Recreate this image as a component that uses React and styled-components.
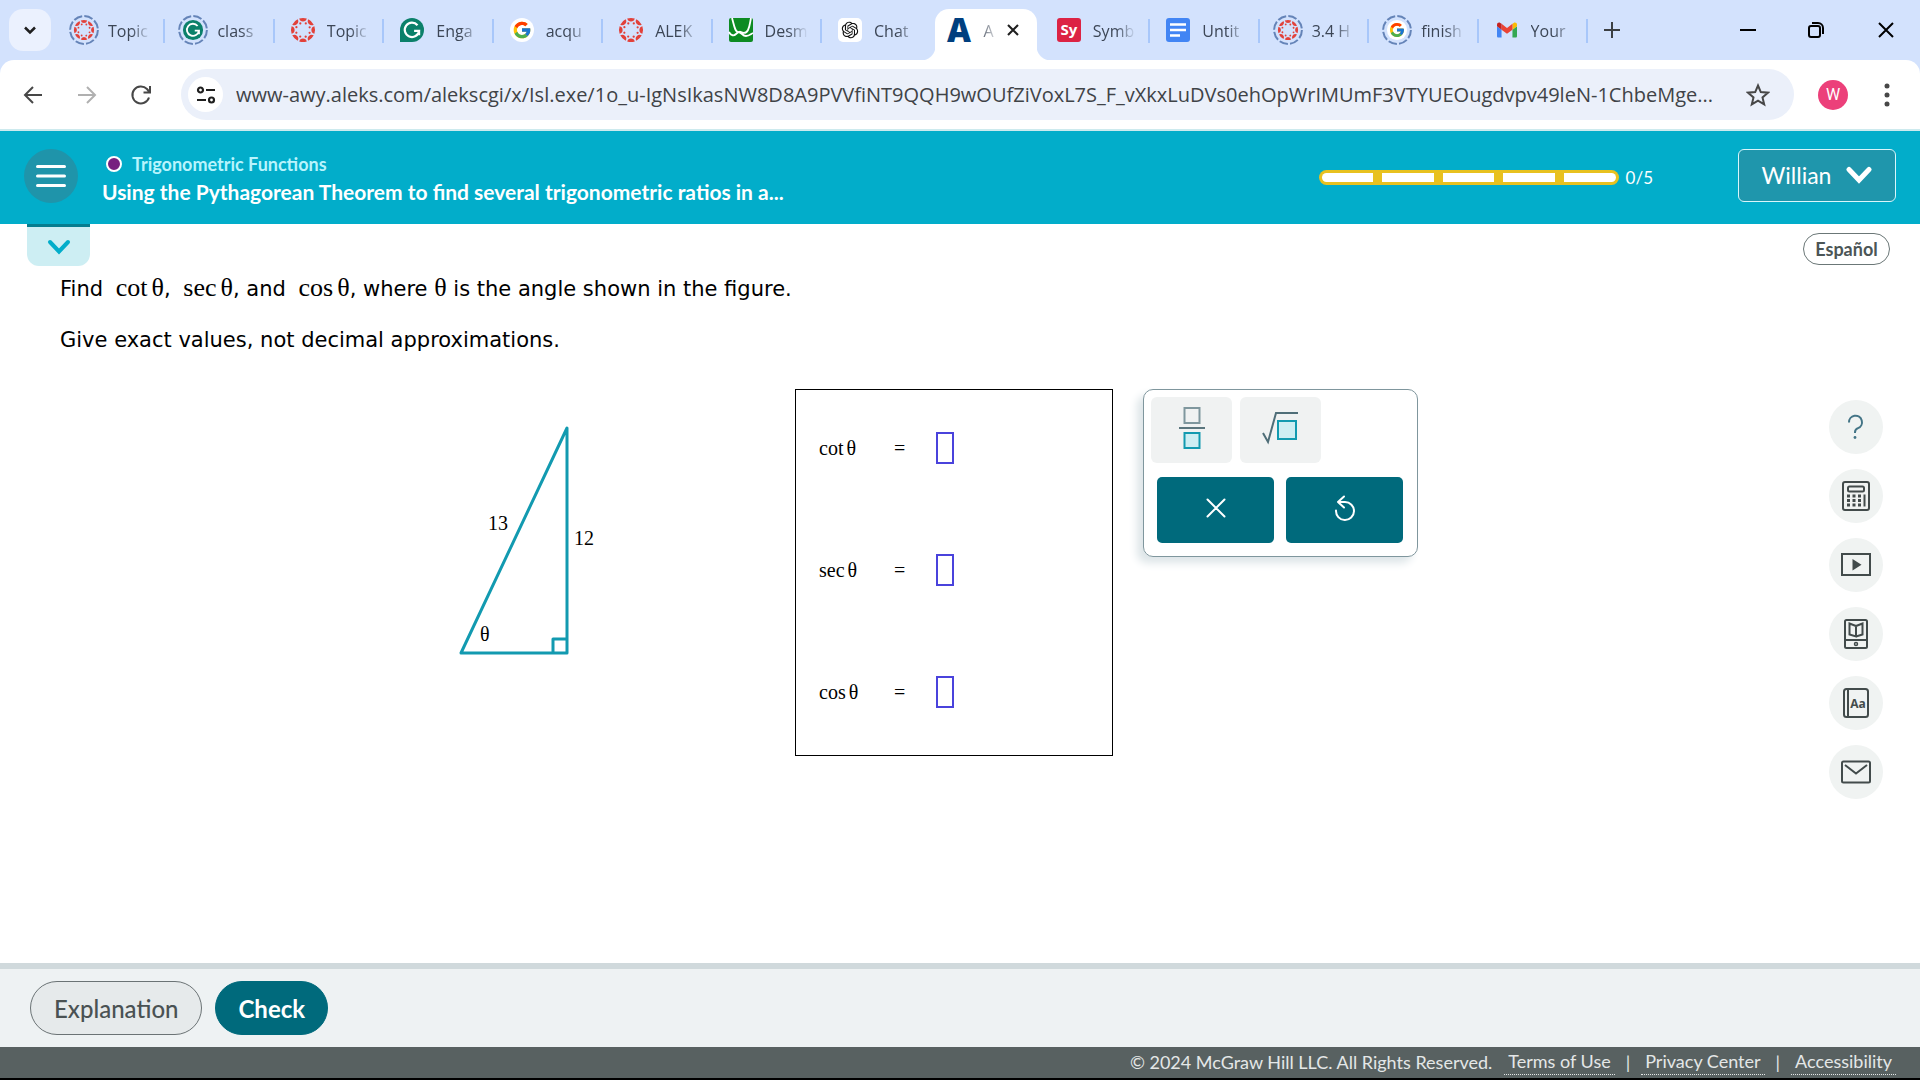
import styled, { createGlobalStyle, css } from 'styled-components';
import { FcGoogle } from 'react-icons/fc';
import { RiOpenaiFill } from 'react-icons/ri';

const GlobalStyle = createGlobalStyle`
  * {
    box-sizing: border-box;
  }
  body {
    margin: 0;
    background: white;
    font-family: Lato, sans-serif;
  }
  button {
    padding: 0;
    border: 0;
    background: none;
    color: inherit;
    font: inherit;
    cursor: pointer;
  }
  svg {
    display: block;
    flex: none;
  }
`;

const Page = styled.div`
  display: flex;
  flex-direction: column;
  min-height: 100vh;
  border-bottom: 2px solid black;
`;

/* Browser window */

const TabStrip = styled.div`
  display: flex;
  align-items: center;
  height: 60px;
  padding-left: 9px;
  background: #d3e2fd;
`;

const TabSearch = styled.button`
  display: grid;
  place-items: center;
  flex: none;
  width: 42px;
  height: 42px;
  margin-right: 5px;
  border-radius: 14px;
  background: #ebf1fe;
`;

const Tabs = styled.div`
  display: grid;
  grid-auto-flow: column;
  grid-auto-columns: minmax(0, 1fr);
  align-self: flex-end;
  flex: 1;
  max-width: 1532px;
  min-width: 0;
`;

const Tab = styled.div`
  position: relative;
  display: flex;
  align-items: center;
  min-width: 0;
  height: 51px;
  padding: 0 12px 9px 13px;

  ${props => props.$divider && css`
    &::after {
      content: '';
      position: absolute;
      right: 0;
      top: 10px;
      width: 2px;
      height: 24px;
      background: #a8c7fa;
    }
  `}

  ${props => props.$active && css`
    margin: 0 4px;
    padding: 0 12px 9px 9px;
    border-radius: 14px 14px 0 0;
    background: white;

    &::before,
    &::after {
      content: '';
      position: absolute;
      bottom: 0;
      width: 14px;
      height: 14px;
    }
    &::before {
      right: 100%;
      background: radial-gradient(circle at 0 0, transparent 14px, white 15px);
    }
    &::after {
      left: 100%;
      background: radial-gradient(circle at 100% 0, transparent 14px, white 15px);
    }
  `}
`;

const TabButton = styled.button`
  display: flex;
  align-items: center;
  flex: 1;
  gap: 9px;
  min-width: 0;
`;

const TabLabel = styled.span`
  flex: 1;
  min-width: 0;
  padding-top: 2px;
  color: #3c4656;
  font-family: "Open Sans", sans-serif;
  font-size: 16px;
  line-height: 24px;
  text-align: left;
  white-space: nowrap;
  mask-image: linear-gradient(to left, transparent 2px, black 22px);
`;

const IconButton = styled.button`
  display: grid;
  place-items: center;
  flex: none;
  width: ${props => props.$size}px;
  height: ${props => props.$size}px;
`;

const WindowControls = styled.div`
  display: flex;
  gap: 35px;
  margin-left: auto;
  padding-right: 17px;
`;

const ToolbarBack = styled.div`
  background: #d3e2fd;
`;

const Toolbar = styled.div`
  display: flex;
  align-items: center;
  height: 71px;
  padding: 0 15px;
  border-bottom: 2px solid #cdeaee;
  border-radius: 14px 14px 0 0;
  background: white;
`;

const NavButtons = styled.div`
  display: flex;
  gap: 18px;
  margin-right: 22px;
`;

const AddressBar = styled.div`
  display: flex;
  align-items: center;
  flex: 1;
  gap: 13px;
  min-width: 0;
  height: 51px;
  margin-right: 24px;
  padding: 0 18px 0 7px;
  border-radius: 26px;
  background: #ebf0fa;
`;

const SiteInfo = styled.button`
  display: grid;
  place-items: center;
  flex: none;
  width: 35px;
  height: 35px;
  border-radius: 50%;
  background: white;
`;

const Address = styled.input`
  flex: 1;
  min-width: 0;
  padding: 0;
  border: 0;
  outline: 0;
  background: none;
  color: #3f4347;
  font-family: "Open Sans", sans-serif;
  font-size: 20px;
  line-height: 28px;
`;

const Avatar = styled.button`
  flex: none;
  width: 30px;
  height: 30px;
  margin-right: 21px;
  border-radius: 50%;
  background: #ec407a;
  color: white;
  font-family: Roboto, sans-serif;
  font-size: 16px;
`;

/* Page header */

const Header = styled.header`
  display: flex;
  align-items: center;
  height: 93px;
  padding: 0 24px 4px;
  background: #02adca;
  color: white;
`;

const MenuButton = styled.button`
  display: grid;
  place-items: center;
  flex: none;
  width: 54px;
  height: 54px;
  margin-right: 24px;
  border-radius: 50%;
  background: #1f94aa;
`;

const Headings = styled.div`
  padding-top: 7px;
`;

const Topic = styled.div`
  display: flex;
  align-items: center;
  gap: 10px;
  padding-left: 4px;
  color: #b8f4fd;
  font-size: 18px;
  font-weight: 700;
  line-height: 24px;
`;

const TopicDot = styled.span`
  width: 16px;
  height: 16px;
  border: 2px solid white;
  border-radius: 50%;
  background: #77207f;
`;

const Title = styled.h1`
  margin: 2px 0 0;
  font-size: 21px;
  font-weight: 700;
  line-height: 28px;
  white-space: nowrap;
`;

const Progress = styled.div`
  display: flex;
  align-items: center;
  gap: 7px;
  margin-left: auto;
  margin-right: 85px;
  padding-top: 4px;
  font-size: 17px;
`;

const Segments = styled.div`
  display: flex;
  gap: 9px;
  width: 300px;
  height: 15px;
  padding: 3px;
  border-radius: 8px;
  background: #e8c11f;
`;

const Segment = styled.span`
  flex: 1;
  background: white;

  &:first-child {
    border-radius: 5px 0 0 5px;
  }
  &:last-child {
    border-radius: 0 5px 5px 0;
  }
`;

const UserButton = styled.button`
  display: flex;
  align-items: center;
  justify-content: center;
  gap: 15px;
  width: 158px;
  height: 53px;
  padding-bottom: 2px;
  border: 1px solid #d9f6fb;
  border-radius: 6px;
  background: #1f96ac;
  font-size: 23px;
`;

/* Exercise */

const Main = styled.main`
  display: flex;
  justify-content: space-between;
  flex: 1;
`;

const Exercise = styled.div`
  flex: 1;
`;

const Collapse = styled.button`
  display: grid;
  place-items: center;
  width: 63px;
  height: 42px;
  margin-left: 27px;
  border-top: 3px solid #057d8f;
  border-radius: 0 0 12px 12px;
  background: #cdeef3;
`;

const Question = styled.div`
  padding: 5px 60px 0;
  color: black;
  font-family: Verdana, "DejaVu Sans", sans-serif;
  font-size: 21px;
`;

const Line = styled.p`
  margin: 0;
  line-height: 36px;

  & + & {
    margin-top: 15px;
  }
`;

const Math = styled.span`
  font-family: "Liberation Serif", serif;
  font-size: ${props => (props.$large ? 26 : 20)}px;
  line-height: 24px;
`;

const MathTerm = styled(Math)`
  margin-left: ${props => (props.$large ? 6 : 0)}px;
`;

const Theta = styled.i`
  margin-left: ${props => (props.$large ? 4 : 3)}px;
  font-style: normal;
`;

const Workspace = styled.div`
  display: flex;
  align-items: flex-start;
  gap: 30px;
  margin-top: 31px;
  padding-left: 440px;
`;

const Figure = styled.svg`
  width: 200px;
  height: 300px;
  margin-right: 125px;
`;

const FigureText = styled.text`
  font-family: "Liberation Serif", serif;
  font-size: 20px;
  fill: black;
`;

const AnswerBox = styled.form`
  display: flex;
  flex-direction: column;
  gap: 90px;
  width: 318px;
  padding: 42px 23px 47px;
  border: 1px solid black;
`;

const AnswerRow = styled.label`
  display: grid;
  grid-template-columns: 75px 42px auto;
  align-items: center;
  justify-content: start;
  height: 32px;
`;

const AnswerInput = styled.input`
  width: 18px;
  height: 32px;
  padding: 0;
  border: 2px solid #4a43dc;
  outline: 0;
  background: white;
  text-align: center;
`;

const Palette = styled.div`
  width: 275px;
  padding: 7px 7px 13px;
  border: 1px solid #7f969d;
  border-radius: 10px;
  box-shadow: -6px 6px 8px #dde5e8;
`;

const Templates = styled.div`
  display: flex;
  gap: 8px;
`;

const TemplateButton = styled.button`
  display: grid;
  place-items: center;
  width: 81px;
  height: 66px;
  padding-bottom: 5px;
  border-radius: 6px;
  background: #f0f2f2;
`;

const Actions = styled.div`
  display: flex;
  gap: 12px;
  margin-top: 14px;
  padding: 0 7px 0 6px;
`;

const ActionButton = styled.button`
  display: grid;
  place-items: center;
  flex: 1;
  height: 66px;
  padding-bottom: 5px;
  border-radius: 5px;
  background: #006a7c;
`;

/* Right rail */

const Rail = styled.aside`
  display: flex;
  flex-direction: column;
  align-items: flex-end;
  padding: 9px 30px 0 0;
`;

const Language = styled.button`
  width: 87px;
  height: 32px;
  border: 1px solid #6b7777;
  border-radius: 16px;
  color: #4b5556;
  font-size: 18px;
  font-weight: 700;
`;

const Tools = styled.div`
  display: flex;
  flex-direction: column;
  gap: 15px;
  margin-top: 135px;
  padding-right: 7px;
`;

const ToolButton = styled.button`
  display: grid;
  place-items: center;
  width: 54px;
  height: 54px;
  border-radius: 50%;
  background: #f0f3f2;
`;

/* Bottom */

const ActionBar = styled.div`
  display: flex;
  align-items: center;
  gap: 13px;
  height: 84px;
  padding: 0 30px;
  border-top: 6px solid #d0d9dc;
  background: #eef2f3;
`;

const PillButton = styled.button`
  height: 54px;
  padding: 0 ${props => (props.$primary ? 22 : 23)}px;
  border: 1px solid ${props => (props.$primary ? '#006a7c' : '#6b7375')};
  border-radius: 27px;
  background: ${props => (props.$primary ? '#006a7c' : '#e6eaeb')};
  color: ${props => (props.$primary ? 'white' : '#4a5253')};
  font-size: 24px;
  font-weight: ${props => (props.$primary ? 700 : 500)};
`;

const Footer = styled.footer`
  display: flex;
  align-items: center;
  justify-content: flex-end;
  height: 31px;
  padding: 0 24px 2px;
  background: #586161;
  color: #e4e7e7;
  font-size: 18px;
`;

const FooterLink = styled.a`
  padding: 0 4px 1px;
  border-bottom: 1px dotted #e4e7e7;
  color: inherit;
  line-height: 24px;
  text-decoration: none;
`;

const Copyright = styled.span`
  margin-right: 12px;
`;

const Bar = styled.span`
  margin: 0 11px;
`;

/* Drawings */

const spokes = [0, 45, 90, 135, 180, 225, 270, 315];

function CanvasMark() {
  return (
    <g fill="#e2413a">
      {spokes.map(angle => (
        <g key={angle} transform={`rotate(${angle} 15 15)`}>
          <path d="M11.2 3.6a12 12 0 0 1 7.6 0a3.9 3.9 0 0 1-7.6 0z" />
          <circle cx="17.8" cy="8.4" r="1.1" />
        </g>
      ))}
    </g>
  );
}

function GrammarlyMark({ square }) {
  return (
    <g>
      <circle cx="15" cy="15" r="12" fill="#0b806a" />
      {square && <path d="M3 15h12v12H3z" fill="#0b806a" />}
      <path
        d="M20.5 10.2a7.2 7.2 0 1 0 1.6 5.6h-5M22.1 15.8v4.4"
        fill="none"
        stroke="white"
        strokeWidth="2.2"
      />
    </g>
  );
}

function GoogleMark() {
  return (
    <g>
      <circle cx="15" cy="15" r="12" fill="white" />
      <FcGoogle x="5" y="5" size="20" />
    </g>
  );
}

function GmailMark() {
  return (
    <svg x="5" y="7" width="20" height="16" viewBox="52 42 88 66">
      <path fill="#4285f4" d="M58 108h14V74L52 59v43c0 3.32 2.69 6 6 6" />
      <path fill="#34a853" d="M120 108h14c3.32 0 6-2.69 6-6V59l-20 15" />
      <path fill="#fbbc04" d="M120 48v26l20-15v-8c0-7.42-8.47-11.65-14.4-7.2" />
      <path fill="#ea4335" d="M72 74V48l24 18 24-18v26L96 92" />
      <path fill="#c5221f" d="M52 51v8l20 15V48l-5.6-4.2c-5.94-4.45-14.4-.22-14.4 7.2" />
    </svg>
  );
}

const marks = {
  canvas: <CanvasMark />,
  grammarly: <GrammarlyMark />,
  grammarlySquare: <GrammarlyMark square />,
  google: <GoogleMark />,
  gmail: <GmailMark />,
  desmos: (
    <g>
      <rect x="3" y="3" width="24" height="24" rx="2" fill="#0d8b22" />
      <path
        d="M6 3c2 7 3 14 6 14 4 0 4 4 8 4 3 0 5-2 7-3M3 17c2 4 5 4 7 2s3-3 5-2 5 2 7-2 2-8 3-12"
        fill="none"
        stroke="white"
        strokeWidth="1.8"
      />
    </g>
  ),
  openai: (
    <g>
      <rect x="3" y="3" width="24" height="24" rx="5" fill="white" />
      <RiOpenaiFill x="5" y="5" size="20" color="#111" />
    </g>
  ),
  aleks: (
    <text x="15" y="27" textAnchor="middle" fontFamily="Open Sans" fontWeight="800" fontSize="33" fill="#003f7f">A</text>
  ),
  symbolab: (
    <g>
      <rect x="3" y="3" width="24" height="24" rx="3" fill="#dc2344" />
      <text x="15" y="20" textAnchor="middle" fontFamily="Open Sans" fontWeight="700" fontSize="15" fill="white">Sy</text>
    </g>
  ),
  docs: (
    <g>
      <rect x="3" y="3" width="24" height="24" rx="3" fill="#4285f4" />
      <path d="M7 9.5h16M7 15h16M7 20.5h10" stroke="white" strokeWidth="2.6" />
    </g>
  ),
};

function Favicon({ mark, ring }) {
  return (
    <svg width="30" height="30" viewBox="0 0 30 30">
      <g transform={ring ? 'translate(2.4 2.4) scale(0.84)' : undefined}>{marks[mark]}</g>
      {ring && (
        <circle
          cx="15"
          cy="15"
          r="13.9"
          fill="none"
          stroke="#6584b8"
          strokeWidth="2"
          strokeDasharray="8.7 2.2"
        />
      )}
    </svg>
  );
}

function Stroke({ size = 24, color = 'currentColor', width = 2, d, ...rest }) {
  return (
    <svg width={size} height={size} viewBox="0 0 24 24" fill="none" stroke={color} strokeWidth={width} {...rest}>
      <path d={d} />
    </svg>
  );
}

const ink = '#424b4b';

function CalculatorIcon() {
  return (
    <svg width="30" height="30" viewBox="0 0 30 30" fill="none" stroke={ink} strokeWidth="2">
      <rect x="2" y="1" width="26" height="28" rx="2" />
      <rect x="7" y="5.5" width="16" height="5" rx="1.5" />
      <path d="M6 15h3M11.5 15h3M17 15h3M6 19.5h3M11.5 19.5h3M17 19.5h3M6 24h3M11.5 24h3M17 24h3" strokeWidth="3" />
      <path d="M23.5 13.5v12" />
    </svg>
  );
}

function VideoIcon() {
  return (
    <svg width="30" height="30" viewBox="0 0 30 30">
      <rect x="1" y="4" width="28" height="21" fill="none" stroke={ink} strokeWidth="2" />
      <path d="M11.5 9v11.5l9-5.8z" fill={ink} />
    </svg>
  );
}

function EbookIcon() {
  return (
    <svg width="30" height="30" viewBox="0 0 30 30" fill="none" stroke={ink} strokeWidth="2">
      <rect x="4" y="1" width="22" height="28" rx="1.5" />
      <path d="M4 21h22" />
      <circle cx="15" cy="25" r="1.5" strokeWidth="1.5" />
      <path d="M15 7v10.5l-6.5-2V4.5zl6.5-2.5v11l-6.5 2" />
    </svg>
  );
}

function DictionaryIcon() {
  return (
    <svg width="30" height="30" viewBox="0 0 30 30">
      <rect x="3" y="1" width="24" height="28" rx="2.5" fill="none" stroke={ink} strokeWidth="2" />
      <path d="M7 1v28" stroke={ink} strokeWidth="2" />
      <text x="17" y="20" textAnchor="middle" fontFamily="Open Sans" fontWeight="700" fontSize="12" fill={ink}>Aa</text>
    </svg>
  );
}

function MailIcon() {
  return (
    <svg width="30" height="30" viewBox="0 0 30 30" fill="none" stroke={ink} strokeWidth="2">
      <rect x="1" y="4.5" width="28" height="21" rx="1.5" />
      <path d="M4 8l11 8.5L26 8" />
    </svg>
  );
}

function HelpIcon() {
  return (
    <svg width="30" height="30" viewBox="0 0 30 30" fill="none" stroke="#437486" strokeWidth="2">
      <path d="M8 10.5a6.5 6.5 0 1 1 9 5.7c-2 .8-3 1.5-3 4v.8" />
      <circle cx="14" cy="25.5" r="1.4" fill="#437486" stroke="none" />
    </svg>
  );
}

const tabs = [
  { label: 'Topic', mark: 'canvas', ring: true },
  { label: 'class', mark: 'grammarly', ring: true },
  { label: 'Topic', mark: 'canvas' },
  { label: 'Enga', mark: 'grammarlySquare' },
  { label: 'acqu', mark: 'google' },
  { label: 'ALEK', mark: 'canvas' },
  { label: 'Desm', mark: 'desmos' },
  { label: 'Chat', mark: 'openai' },
  { label: 'A', mark: 'aleks', active: true },
  { label: 'Symb', mark: 'symbolab' },
  { label: 'Untit', mark: 'docs' },
  { label: '3.4 H', mark: 'canvas', ring: true },
  { label: 'finish', mark: 'google', ring: true },
  { label: 'Your', mark: 'gmail' },
];

const address =
  'www-awy.aleks.com/alekscgi/x/Isl.exe/1o_u-IgNsIkasNW8D8A9PVVfiNT9QQH9wOUfZiVoxL7S_F_vXkxLuDVs0ehOpWrIMUmF3VTYUEOugdvpv49leN-1ChbeMge...';

const answers = ['cot', 'sec', 'cos'];

const tools = [
  { name: 'Help', icon: <HelpIcon /> },
  { name: 'Calculator', icon: <CalculatorIcon /> },
  { name: 'Video', icon: <VideoIcon /> },
  { name: 'eBook', icon: <EbookIcon /> },
  { name: 'Dictionary', icon: <DictionaryIcon /> },
  { name: 'Message', icon: <MailIcon /> },
];

function Trig({ name, large }) {
  return (
    <MathTerm $large={large}>
      {name}
      <Theta $large={large}>θ</Theta>
    </MathTerm>
  );
}

function Browser() {
  return (
    <>
      <TabStrip>
        <TabSearch aria-label="Search tabs">
          <Stroke size={20} color="#1f1f1f" width={3} d="M6 9l6 6 6-6" />
        </TabSearch>
        <Tabs>
          {tabs.map((tab, i) => (
            <Tab key={i} $active={tab.active} $divider={!tab.active && !tabs[i + 1]?.active}>
              <TabButton>
                <Favicon mark={tab.mark} ring={tab.ring} />
                <TabLabel>{tab.label}</TabLabel>
              </TabButton>
              {tab.active && (
                <IconButton $size={24} aria-label="Close tab">
                  <Stroke size={20} color="#1f1f1f" width={2.5} d="M6 6l12 12M18 6L6 18" />
                </IconButton>
              )}
            </Tab>
          ))}
        </Tabs>
        <IconButton $size={48} aria-label="New tab">
          <Stroke color="#3c4043" d="M12 4v16M4 12h16" />
        </IconButton>
        <WindowControls>
          <IconButton $size={34} aria-label="Minimize">
            <Stroke color="black" d="M4 12h16" />
          </IconButton>
          <IconButton $size={34} aria-label="Restore">
            <Stroke color="black" width={2} d="M6 8h7a2 2 0 0 1 2 2v7a2 2 0 0 1-2 2H6a2 2 0 0 1-2-2v-7a2 2 0 0 1 2-2zM7 5h6a5 5 0 0 1 5 5v6" />
          </IconButton>
          <IconButton $size={34} aria-label="Close">
            <Stroke color="black" d="M5 5l14 14M19 5L5 19" />
          </IconButton>
        </WindowControls>
      </TabStrip>
      <ToolbarBack>
        <Toolbar>
          <NavButtons>
            <IconButton $size={36} aria-label="Back">
              <Stroke color="#474747" d="M21 12H4M12 4l-8 8 8 8" />
            </IconButton>
            <IconButton $size={36} aria-label="Forward">
              <Stroke color="#b0b0b0" d="M3 12h17M12 4l8 8-8 8" />
            </IconButton>
            <IconButton $size={36} aria-label="Reload">
              <Stroke color="#474747" d="M20 14.5a8.5 8.5 0 1 1-2-8.5l2.5 3M21 3v6.5h-6.5" />
            </IconButton>
          </NavButtons>
          <AddressBar>
            <SiteInfo aria-label="Site information">
              <Stroke color="#1f1f1f" width={2.2} d="M6.5 4.5a2.5 2.5 0 1 0 0 5a2.5 2.5 0 1 0 0-5M12 7h9M17.5 14.5a2.5 2.5 0 1 0 0 5a2.5 2.5 0 1 0 0-5M3 17h9" />
            </SiteInfo>
            <Address aria-label="Address" value={address} readOnly />
            <IconButton $size={36} aria-label="Bookmark">
              <Stroke color="#474747" d="M12 2.5l2.8 6.6 7.2.6-5.5 4.7 1.7 7-6.2-3.8-6.2 3.8 1.7-7L2 9.7l7.2-.6z" />
            </IconButton>
          </AddressBar>
          <Avatar>W</Avatar>
          <IconButton $size={36} aria-label="Browser menu">
            <svg width="6" height="24" viewBox="0 0 6 24" fill="#474747">
              <circle cx="3" cy="3" r="2.5" />
              <circle cx="3" cy="12" r="2.5" />
              <circle cx="3" cy="21" r="2.5" />
            </svg>
          </IconButton>
        </Toolbar>
      </ToolbarBack>
    </>
  );
}

function App() {
  return (
    <Page>
      <GlobalStyle />
      <Browser />

      <Header>
        <MenuButton aria-label="Menu">
          <svg width="30" height="24" viewBox="0 0 30 24" stroke="white" strokeWidth="3" strokeLinecap="round">
            <path d="M1.5 2.5h27M1.5 12h27M1.5 21.5h27" />
          </svg>
        </MenuButton>
        <Headings>
          <Topic>
            <TopicDot />
            Trigonometric Functions
          </Topic>
          <Title>Using the Pythagorean Theorem to find several trigonometric ratios in a...</Title>
        </Headings>
        <Progress>
          <Segments>
            {[1, 2, 3, 4, 5].map(n => <Segment key={n} />)}
          </Segments>
          0/5
        </Progress>
        <UserButton>
          Willian
          <svg width="26" height="18" viewBox="0 0 26 18" fill="none" stroke="white" strokeWidth="5" strokeLinecap="round">
            <path d="M3 3.5l10 10.5 10-10.5" />
          </svg>
        </UserButton>
      </Header>

      <Main>
        <Exercise>
          <Collapse aria-label="Expand">
            <svg width="24" height="16" viewBox="0 0 24 16" fill="none" stroke="#02adca" strokeWidth="4" strokeLinecap="round">
              <path d="M3 3l9 9.5L21 3" />
            </svg>
          </Collapse>
          <Question>
            <Line>
              Find <Trig name="cot" large />, <Trig name="sec" large />, and <Trig name="cos" large />, where{' '}
              <Math $large>θ</Math> is the angle shown in the figure.
            </Line>
            <Line>Give exact values, not decimal approximations.</Line>
          </Question>
          <Workspace>
            <Figure viewBox="0 0 200 300" role="img" aria-label="Right triangle">
              <g fill="none" stroke="#129ab0" strokeWidth="3" strokeLinejoin="round">
                <path d="M21 264L127 39v225z" />
                <path d="M113 264v-14h14" />
              </g>
              <FigureText x="48" y="141">13</FigureText>
              <FigureText x="134" y="156">12</FigureText>
              <FigureText x="40" y="252">θ</FigureText>
            </Figure>
            <AnswerBox>
              {answers.map(name => (
                <AnswerRow key={name}>
                  <Trig name={name} />
                  <Math>=</Math>
                  <AnswerInput />
                </AnswerRow>
              ))}
            </AnswerBox>
            <Palette>
              <Templates>
                <TemplateButton aria-label="Fraction">
                  <svg width="28" height="44" viewBox="0 0 28 44" fill="none" strokeWidth="2">
                    <rect x="6.5" y="2" width="15" height="15" stroke="#7f979e" />
                    <path d="M1 22h26" stroke="#5b767e" />
                    <rect x="6.5" y="27" width="15" height="15" fill="#cdeef3" stroke="#129ab0" />
                  </svg>
                </TemplateButton>
                <TemplateButton aria-label="Square root">
                  <svg width="38" height="40" viewBox="0 0 38 40" fill="none" strokeWidth="2">
                    <path d="M1 25l5 9 8-29h22" stroke="#4f6e78" />
                    <rect x="16" y="13" width="18" height="18" fill="#cdeef3" stroke="#129ab0" />
                  </svg>
                </TemplateButton>
              </Templates>
              <Actions>
                <ActionButton aria-label="Clear">
                  <Stroke color="white" strokeLinecap="round" d="M3.5 3.5l17 17M20.5 3.5l-17 17" />
                </ActionButton>
                <ActionButton aria-label="Undo">
                  <svg width="24" height="28" viewBox="0 0 24 28" fill="none" stroke="white" strokeWidth="2" strokeLinecap="round" strokeLinejoin="round">
                    <path d="M3 16.5a9 9 0 1 0 9-8.5H5M11 2.5L5 8l6 5.5" />
                  </svg>
                </ActionButton>
              </Actions>
            </Palette>
          </Workspace>
        </Exercise>
        <Rail>
          <Language>Español</Language>
          <Tools>
            {tools.map(tool => (
              <ToolButton key={tool.name} aria-label={tool.name}>{tool.icon}</ToolButton>
            ))}
          </Tools>
        </Rail>
      </Main>

      <ActionBar>
        <PillButton>Explanation</PillButton>
        <PillButton $primary>Check</PillButton>
      </ActionBar>
      <Footer>
        <Copyright>© 2024 McGraw Hill LLC. All Rights Reserved.</Copyright>
        <FooterLink href="#terms">Terms of Use</FooterLink>
        <Bar>|</Bar>
        <FooterLink href="#privacy">Privacy Center</FooterLink>
        <Bar>|</Bar>
        <FooterLink href="#accessibility">Accessibility</FooterLink>
      </Footer>
    </Page>
  );
}

export default App;
